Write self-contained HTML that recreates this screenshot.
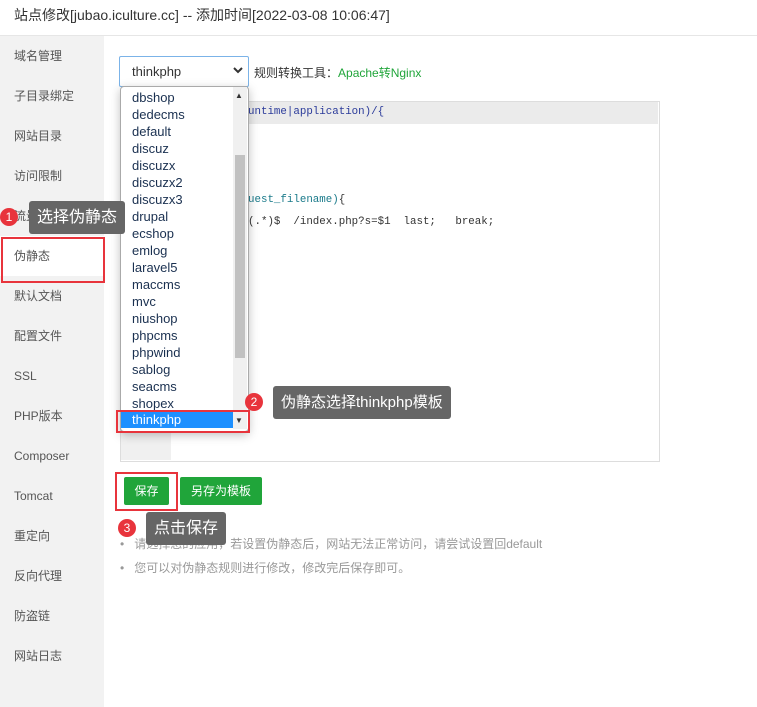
<!DOCTYPE html><html><head><meta charset="utf-8"><style>
body{margin:0;width:757px;height:707px;background:#fff;font-family:"Liberation Sans","Noto Sans CJK SC",sans-serif;position:relative;overflow:hidden;font-size:12px;color:#333}
.a{position:absolute}
.title{left:0;top:0;width:757px;height:35px;border-bottom:1px solid #e6e6e6;background:#fff;font-size:14px;line-height:31px;text-indent:14px;color:#333}
.side{left:0;top:36px;width:104px;height:671px;background:#f2f2f2}
.side div{height:40px;line-height:40px;padding-left:14px;font-size:12px;color:#555}
.code{left:120px;top:101px;width:538px;height:359px;border:1px solid #ddd;background:#fff}
.gut{left:121px;top:102px;width:50px;height:358px;background:#f0f0f0}
.line{left:171px;top:102px;width:487px;height:22px;background:#ebebeb}
.mono{font-family:"Liberation Mono",monospace;font-size:10.8px;color:#333;white-space:pre}
.list{left:120px;top:86px;width:127px;height:344px;background:#fff;border:1px solid #aaa;border-radius:4px;box-shadow:0 3px 10px rgba(0,0,0,.25)}
.list div{position:absolute;left:11px;font-size:13px;color:#1a3050;line-height:17px}
.tip{background:#666;color:#fff;border-radius:3px;font-size:15px;padding:0 8px}
.num{width:18px;height:18px;border-radius:50%;background:#e8343c;color:#fff;font-size:12px;text-align:center;line-height:18px}
.red{border:2px solid #e8343c}
.btn{background:#20a53a;color:#fff;border-radius:2px;text-align:center;font-size:12px;line-height:28px;height:28px}
</style></head><body>
<div class="a title">站点修改[jubao.iculture.cc] -- 添加时间[2022-03-08 10:06:47]</div>
<div class="a side">
<div>域名管理</div><div>子目录绑定</div><div>网站目录</div><div>访问限制</div><div>流量限制</div><div style="background:#fff">伪静态</div><div>默认文档</div><div>配置文件</div><div>SSL</div><div>PHP版本</div><div>Composer</div><div>Tomcat</div><div>重定向</div><div>反向代理</div><div>防盗链</div><div>网站日志</div>
</div>
<div class="a" style="left:119px;top:56px;width:128px;height:29px;border:1px solid #7bb3e8;border-radius:2px;background:#fff;font-size:13px;line-height:29px;text-indent:12px">thinkphp</div>
<svg class="a" style="left:233px;top:67px" width="10" height="8"><path d="M1 1l4 4 4-4" stroke="#333" stroke-width="2" fill="none"/></svg>
<div class="a" style="left:254px;top:64px;font-size:12px">规则转换工具：<span style="color:#20a53a">Apache转Nginx</span></div>
<div class="a code"></div><div class="a gut"></div><div class="a line"></div>
<div class="a mono" style="left:248px;top:106px;color:#2a3a9a">untime|application)/{</div>
<div class="a mono" style="left:248px;top:194px;color:#1a7a8a">uest_filename)<span style="color:#333">{</span></div>
<div class="a mono" style="left:248px;top:216px">(.*)$  /index.php?s=$1  last;   break;</div>
<div class="a list">
<div style="top:2px">dbshop</div><div style="top:19px">dedecms</div><div style="top:36px">default</div><div style="top:53px">discuz</div><div style="top:70px">discuzx</div><div style="top:87px">discuzx2</div><div style="top:104px">discuzx3</div><div style="top:121px">drupal</div><div style="top:138px">ecshop</div><div style="top:155px">emlog</div><div style="top:172px">laravel5</div><div style="top:189px">maccms</div><div style="top:206px">mvc</div><div style="top:223px">niushop</div><div style="top:240px">phpcms</div><div style="top:257px">phpwind</div><div style="top:274px">sablog</div><div style="top:291px">seacms</div><div style="top:308px">shopex</div>
<div style="top:324px;left:0;width:113px;height:17px;background:#1e90ff;color:#fff;padding-left:11px;box-sizing:border-box">thinkphp</div>
<div style="left:112px;top:0;width:14px;height:342px;background:#f0f0f0"></div>
<div style="left:114px;top:68px;width:10px;height:203px;background:#c1c1c1"></div>
<div style="left:114px;top:0;font-size:8px;color:#333">▲</div>
<div style="left:114px;top:325px;font-size:8px;color:#333">▼</div>
</div>
<div class="a red" style="left:116px;top:410px;width:130px;height:19px"></div>
<div class="a num" style="left:245px;top:393px">2</div>
<div class="a tip" style="left:273px;top:386px;line-height:33px">伪静态选择thinkphp模板</div>
<div class="a btn" style="left:124px;top:477px;width:45px">保存</div>
<div class="a btn" style="left:180px;top:477px;width:82px">另存为模板</div>
<div class="a red" style="left:115px;top:472px;width:59px;height:35px"></div>
<div class="a" style="left:120px;top:532px;color:#999;font-size:12px;line-height:24px">•&nbsp;&nbsp;&nbsp;请选择您的应用，若设置伪静态后，网站无法正常访问，请尝试设置回default<br>•&nbsp;&nbsp;&nbsp;您可以对伪静态规则进行修改，修改完后保存即可。</div>
<div class="a num" style="left:118px;top:519px">3</div>
<div class="a tip" style="left:146px;top:512px;line-height:33px;font-size:16px">点击保存</div>
<div class="a red" style="left:1px;top:237px;width:100px;height:42px"></div>
<div class="a num" style="left:0px;top:208px">1</div>
<div class="a tip" style="left:29px;top:201px;line-height:33px;font-size:16px">选择伪静态</div>
</body></html>
